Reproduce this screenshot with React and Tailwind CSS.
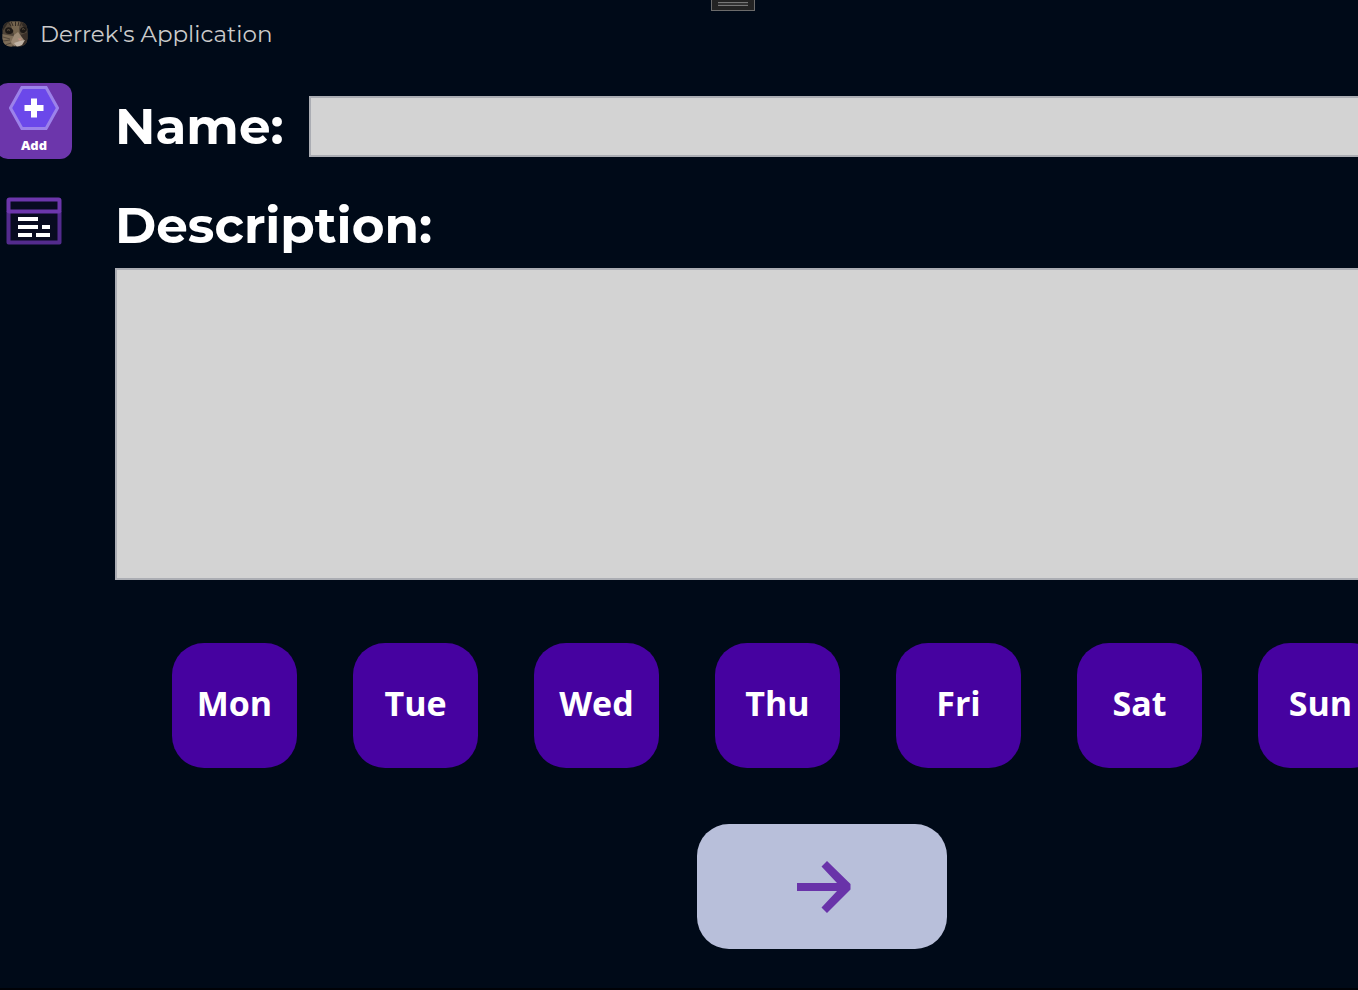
const days = ['Mon', 'Tue', 'Wed', 'Thu', 'Fri', 'Sat', 'Sun']

function CatAvatar() {
  return (
    <svg viewBox="0 0 26 26" className="size-[26px] shrink-0" role="img" aria-label="Cat">
      <defs>
        <clipPath id="cat-clip">
          <rect x="0.5" y="0.5" width="25" height="25" rx="8" />
        </clipPath>
      </defs>
      <g clipPath="url(#cat-clip)">
        <rect width="26" height="26" fill="#51463a" />
        <path d="M0 0h7l-3 5-4 6zM26 0h-5l-1 4 6 8z" fill="#2f2924" />
        <path d="M8 0h10l-1 8 1 8h-5l-3-8z" fill="#75654f" />
        <path d="M9 0l2 5M13.500 0v5M17 0l-1 5M6 1l3 4M20 1l-2 4" stroke="#342b23" strokeWidth="1" />
        <path d="M0 13l5 1 6 1 2 4-3 7H0z" fill="#7d6d58" />
        <path d="M19 14l7-3v15h-7z" fill="#3a3029" />
        <path d="M3 9c1-3 5-4 8 0 1 2-1 4-4 4-2 0-4-1-4-4z" fill="#1d1916" />
        <path d="M18 9c1-3 4-4 6-2 1 3-1 5-3 5-2 0-3-1-3-3z" fill="#1d1916" />
        <path d="M5 9.500c1-1 2-1 3 0M20 8.500c1-1 1.500-1 2.500 0" stroke="#81735c" strokeWidth="0.8" fill="none" />
        <path d="M12 14l4-3 3 4 3 4-4 4-6 2-3-4z" fill="#9c8a75" />
        <path d="M15.500 17.500h4.500l-2 2.500z" fill="#c08f82" />
        <path d="M12 22l6-2 5-1-3 5-5 2z" fill="#c0b3a5" />
        <path d="M1 16l7 2M1 20l7-1M3 24l6-2" stroke="#4a3f34" strokeWidth="0.8" />
      </g>
    </svg>
  )
}

function AddIcon() {
  return (
    <svg viewBox="0 0 50 44" className="h-11 w-[50px] shrink-0" aria-hidden="true">
      <path d="M12.900 1.500h24.200L48.500 22 37.100 42.500H12.900L1.500 22z" fill="#6b48ea" stroke="#9c82ea" strokeWidth="3" />
      <path d="M22 12.500h6V19h6.500v6H28v6.500h-6V25h-6.500v-6H22z" fill="#fff" />
    </svg>
  )
}

function ListIcon() {
  return (
    <svg viewBox="0 0 56 48" className="h-12 w-14" aria-hidden="true">
      <rect x="2.500" y="2.500" width="51" height="43" rx="1" fill="#080b20" />
      <path d="M2.500 14v31.500h51V14" fill="none" stroke="#532b8d" strokeWidth="4" strokeLinejoin="round" />
      <rect x="2.500" y="2.500" width="51" height="12" rx="1" fill="none" stroke="#6c36ab" strokeWidth="4" />
      <path d="M12 22h20M12 30h20M36 30h8M12 38h14M30 38h14" stroke="#fff" strokeWidth="4" />
    </svg>
  )
}

function ArrowIcon() {
  return (
    <svg viewBox="0 0 56 54" className="ml-1 h-[54px] w-14" aria-hidden="true">
      <path d="M1 23h40L25.500 6.500 31 1l23.500 23v5.500L31 53l-5.500-5.500L41 31H1z" fill="#6933a9" />
    </svg>
  )
}

export default function App() {
  return (
    <div className="relative min-h-screen overflow-hidden border-b-2 border-[#000207] bg-[#000a18] font-['Montserrat','Inter',sans-serif] text-white">
      <div className="absolute left-[711px] top-0 flex h-[11px] w-11 flex-col items-center border border-t-0 border-[#6b6b6b] bg-[#232323] pt-[2px]">
        <span className="h-1 w-[30px] border-y border-[#777] bg-[#333]" />
      </div>

      <header className="flex h-[68px] items-center gap-3 pl-[2px] text-[23px] text-[#cbcbcb]">
        <CatAvatar />
        <h1>Derrek's Application</h1>
      </header>

      <div className="flex">
        <nav className="flex w-[115px] shrink-0 flex-col items-start pt-[15px]">
          <button type="button" className="-ml-1 flex h-[76px] w-[76px] flex-col items-center rounded-xl bg-[#6c36ab] pt-[3px] font-['Segoe_UI','Open_Sans',sans-serif] text-[13px] leading-[30px] font-extrabold">
            <AddIcon />
            Add
          </button>
          <button type="button" aria-label="List" className="ml-[6px] mt-[38px]">
            <ListIcon />
          </button>
        </nav>

        <form className="min-w-0 flex-1 pt-7">
          <div className="flex items-center">
            <label htmlFor="name" className="w-[194px] shrink-0 text-[50px] leading-[60px] font-bold">Name:</label>
            <input id="name" type="text" className="-mr-1 h-[61px] min-w-0 flex-1 border-2 border-[#abadb3] bg-[#d3d3d3] px-3 text-3xl text-black" />
          </div>
          <label htmlFor="description" className="mt-[39px] block text-[50px] leading-[60px] font-bold">Description:</label>
          <div className="-mr-1 mt-3 flex">
            <textarea id="description" className="h-[312px] flex-1 resize-none border-2 border-[#abadb3] bg-[#d3d3d3] p-3 text-3xl text-black" />
          </div>

          <div className="mt-[63px] flex gap-14 pl-[57px] font-['Segoe_UI','Open_Sans',sans-serif]">
            {days.map((day) => (
              <button key={day} type="button" className="size-[125px] shrink-0 rounded-[32px] bg-[#4602a0] pb-1 text-[34px] font-bold">
                {day}
              </button>
            ))}
          </div>

          <div className="mt-14 flex justify-center pl-[170px]">
            <button type="submit" aria-label="Next" className="flex h-[125px] w-[250px] items-center justify-center rounded-[32px] bg-[#b8bfda]">
              <ArrowIcon />
            </button>
          </div>
        </form>
      </div>
    </div>
  )
}
